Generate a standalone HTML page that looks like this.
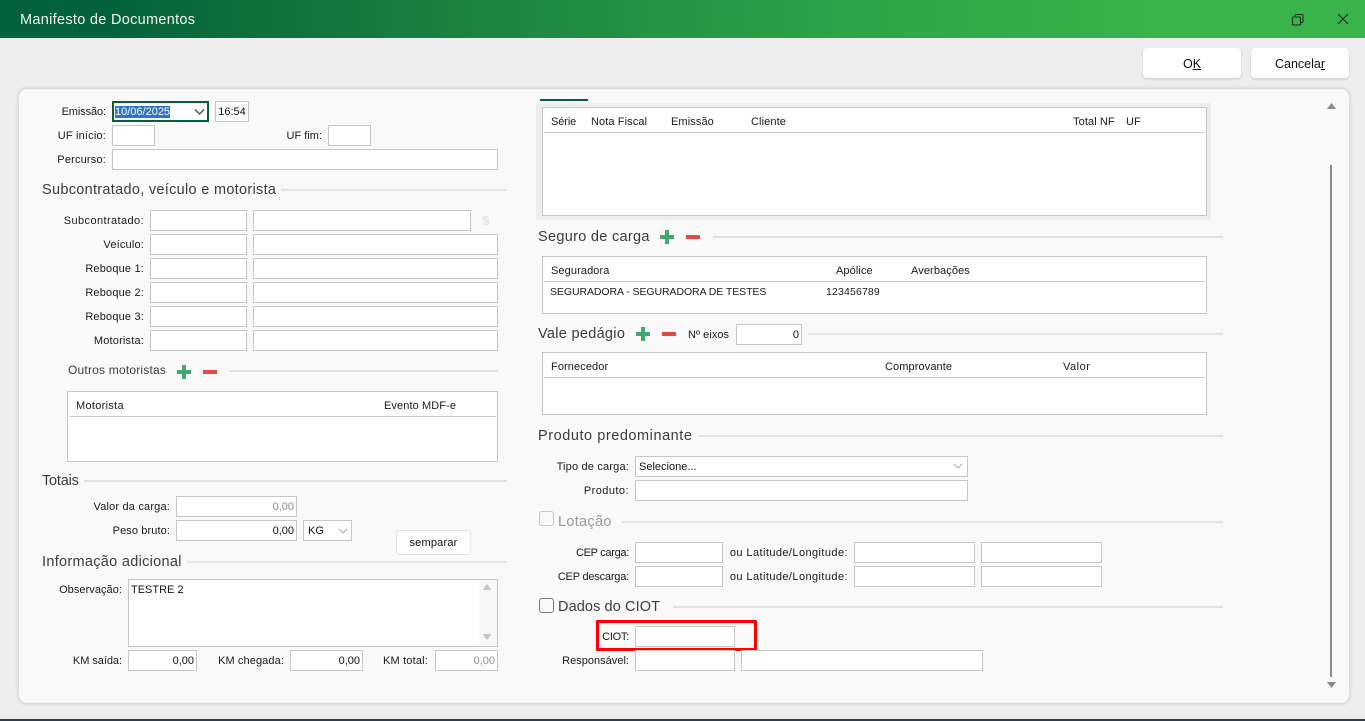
<!DOCTYPE html>
<html lang="pt-BR"><head><meta charset="utf-8"><title>Manifesto de Documentos</title>
<style>
*{box-sizing:border-box}
html,body{margin:0;padding:0;width:1365px;height:721px;overflow:hidden;background:#eee;font-family:"Liberation Sans",sans-serif;font-size:11px;color:#111}
.a{position:absolute}
#bar{left:0;top:0;width:1365px;height:38px;background:linear-gradient(90deg,#03623a 0%,#04623a 8%,#1a8040 32%,#2ba548 62%,#38b44a 85%,#38b44a 100%)}
#title{left:20px;top:12px;color:#f2f7f2;font-size:14.5px;line-height:17px;letter-spacing:.3px}
#foot{left:0;top:719px;width:1365px;height:2px;background:#2b3d4f}
.btn{background:#fff;border-radius:4px;box-shadow:0 1px 2px rgba(0,0,0,.18);text-align:center;font-size:12.5px;line-height:32px;height:30px;width:98px;top:48px}
#card{left:19px;top:89px;width:1330px;height:614px;background:#f9f9f9;border-radius:8px;box-shadow:0 0 5px rgba(0,0,0,.2)}
.f{position:absolute;background:#fff;border:1px solid #c6c6c6;height:21px;line-height:21px;text-align:right;padding:0 2px;font-size:11px;white-space:nowrap;overflow:hidden}
.l{position:absolute;text-align:right;line-height:21px;height:21px;white-space:nowrap;font-size:11px;letter-spacing:.18px;color:#1a1a1a;margin-top:1px}
.h{position:absolute;font-size:14.5px;line-height:20px;color:#3c3c3c;white-space:nowrap;letter-spacing:.3px;margin-top:1px}
.r{position:absolute;height:2px;background:#e2e2e2}
.t{position:absolute;background:#fff;border:1px solid #c6c6c6}
.t i{position:absolute;left:1px;right:1px;height:1px;background:#c9c9c9;display:block}
.c{position:absolute;line-height:14px;white-space:nowrap;font-size:11px;letter-spacing:.1px;color:#1a1a1a;margin-top:1px}
.g{color:#8d8d8d}
.p{position:absolute;width:14px;height:14px}
.p:before{content:"";position:absolute;left:5px;top:0;width:4px;height:14px;background:#3fa870}
.p:after{content:"";position:absolute;left:0;top:5px;width:14px;height:4px;background:#3fa870}
.m{position:absolute;width:14px;height:4px;background:#e8493f}
.cb{position:absolute;width:15px;height:15px;border:1px solid #777;border-radius:3px;background:#f9f9f9}
svg{display:block}
</style></head><body>
<div class="a" id="bar"></div>
<div class="a" id="title">Manifesto de Documentos</div>
<svg class="a" style="left:1291px;top:13px" width="14" height="14" viewBox="0 0 14 14" fill="none" stroke="#1f2a22" stroke-width="1.1"><rect x="1.5" y="4" width="8" height="8" rx="1"/><path d="M4 4V2.5q0-1 1-1h6q1 0 1 1v6q0 1-1 1H9.500"/></svg>
<svg class="a" style="left:1336px;top:12px" width="14" height="14" viewBox="0 0 14 14" fill="none" stroke="#1f2a22" stroke-width="1.1"><path d="M2 2l10 10M12 2L2 12"/></svg>

<div class="a btn" style="left:1143px">O<u>K</u></div>
<div class="a btn" style="left:1251px">Cancela<u>r</u></div>
<div class="a" id="card"></div>

<!-- left column -->
<div class="l" style="right:1259px;top:101px;letter-spacing:-.1px">Emissão:</div>
<div class="f" style="left:112px;top:101px;width:97px;border:2px solid #0b5c3c;text-align:left;line-height:18px;padding:0 1px"><span style="background:#2f74c8;color:#fff;font-size:11px">10/06/2025</span></div>
<svg class="a" style="left:194px;top:108px" width="11" height="8" viewBox="0 0 11 8" fill="none" stroke="#555" stroke-width="1.5"><path d="M1 1.500l4.500 4.500L10 1.500"/></svg>
<div class="f" style="left:215px;top:101px;width:34px;text-align:center;padding:0">16:54</div>
<div class="l" style="right:1259px;top:125px">UF início:</div>
<div class="f" style="left:112px;top:125px;width:43px"></div>
<div class="l" style="right:1043px;top:125px;letter-spacing:0">UF fim:</div>
<div class="f" style="left:328px;top:125px;width:43px"></div>
<div class="l" style="right:1259px;top:149px">Percurso:</div>
<div class="f" style="left:112px;top:149px;width:386px"></div>

<div class="h" style="left:42px;top:179px">Subcontratado, veículo e motorista</div><div class="r" style="left:281px;top:189px;width:226px"></div>

<div class="l" style="right:1221px;top:210px;letter-spacing:.4px">Subcontratado:</div>
<div class="f" style="left:150px;top:210px;width:97px"></div><div class="f" style="left:253px;top:210px;width:218px"></div>
<div class="a" style="left:482px;top:213px;color:#e6e6e6;font-size:13px;font-weight:bold">$</div>
<div class="l" style="right:1221px;top:234px">Veículo:</div>
<div class="f" style="left:150px;top:234px;width:97px"></div><div class="f" style="left:253px;top:234px;width:245px"></div>
<div class="l" style="right:1221px;top:258px">Reboque 1:</div>
<div class="f" style="left:150px;top:258px;width:97px"></div><div class="f" style="left:253px;top:258px;width:245px"></div>
<div class="l" style="right:1221px;top:282px">Reboque 2:</div>
<div class="f" style="left:150px;top:282px;width:97px"></div><div class="f" style="left:253px;top:282px;width:245px"></div>
<div class="l" style="right:1221px;top:306px">Reboque 3:</div>
<div class="f" style="left:150px;top:306px;width:97px"></div><div class="f" style="left:253px;top:306px;width:245px"></div>
<div class="l" style="right:1221px;top:330px">Motorista:</div>
<div class="f" style="left:150px;top:330px;width:97px"></div><div class="f" style="left:253px;top:330px;width:245px"></div>

<div class="h" style="left:68px;top:360px;font-size:12px;line-height:18px;letter-spacing:.2px">Outros motoristas</div>
<div class="p" style="left:177px;top:365px"></div><div class="m" style="left:203px;top:370px"></div>
<div class="r" style="left:229px;top:370px;width:269px"></div>
<div class="t" style="left:67px;top:391px;width:431px;height:71px"><i style="top:24px"></i></div>
<div class="c" style="left:76px;top:398px;letter-spacing:.3px">Motorista</div><div class="c" style="left:384px;top:398px">Evento MDF-e</div>

<div class="h" style="left:42px;top:470px;letter-spacing:-.2px">Totais</div><div class="r" style="left:84px;top:480px;width:423px"></div>
<div class="l" style="right:1195px;top:496px">Valor da carga:</div>
<div class="f g" style="left:176px;top:496px;width:121px">0,00</div>
<div class="l" style="right:1195px;top:520px;letter-spacing:.1px">Peso bruto:</div>
<div class="f" style="left:176px;top:520px;width:121px">0,00</div>
<div class="f" style="left:303px;top:520px;width:49px;text-align:left;padding-left:4px;line-height:21px">KG</div>
<svg class="a" style="left:338px;top:528px" width="10" height="6" viewBox="0 0 10 6" fill="none" stroke="#aaa"><path d="M1 1l4 4 4-4"/></svg>
<div class="a" style="left:396px;top:530px;width:75px;height:25px;background:#fff;border:1px solid #e3e3e3;border-radius:3px;text-align:center;line-height:25px;letter-spacing:.2px">semparar</div>
<div class="h" style="left:42px;top:551px">Informação adicional</div><div class="r" style="left:187px;top:561px;width:320px"></div>
<div class="l" style="right:1243px;top:579px;letter-spacing:.05px">Observação:</div>
<div class="f" style="left:128px;top:579px;width:370px;height:68px;text-align:left;line-height:20px;padding-left:2px">TESTRE 2</div>
<div class="a" style="left:479px;top:580px;width:18px;height:66px;background:#f8f8f8"></div>
<svg class="a" style="left:482px;top:584px" width="10" height="62" viewBox="0 0 10 62" fill="#c4c4c4"><path d="M5 0l4.500 6H.500zM.500 50h9L5 56z"/></svg>
<div class="l" style="right:1243px;top:650px;letter-spacing:-.05px">KM saída:</div>
<div class="f" style="left:128px;top:650px;width:69px">0,00</div>
<div class="l" style="right:1081px;top:650px;letter-spacing:.1px">KM chegada:</div>
<div class="f" style="left:290px;top:650px;width:73px">0,00</div>
<div class="l" style="right:937px;top:650px">KM total:</div>
<div class="f g" style="left:435px;top:650px;width:63px">0,00</div>

<!-- right column -->
<div class="a" style="left:540px;top:99px;width:48px;height:2px;background:#0b5c3c"></div>
<div class="a" style="left:536px;top:103px;width:675px;height:117px;background:#eee"></div>
<div class="t" style="left:542px;top:107px;width:665px;height:109px"><i style="top:24px"></i></div>
<div class="c" style="left:551px;top:114px;letter-spacing:-.1px">Série</div><div class="c" style="left:591px;top:114px">Nota Fiscal</div><div class="c" style="left:671px;top:114px">Emissão</div><div class="c" style="left:751px;top:114px">Cliente</div><div class="c" style="left:1073px;top:114px">Total NF</div><div class="c" style="left:1126px;top:114px">UF</div>

<div class="h" style="left:538px;top:226px">Seguro de carga</div>
<div class="p" style="left:660px;top:230px"></div><div class="m" style="left:686px;top:235px"></div>
<div class="r" style="left:713px;top:236px;width:510px"></div>
<div class="t" style="left:542px;top:256px;width:665px;height:58px"><i style="top:24px"></i></div>
<div class="c" style="left:551px;top:263px">Seguradora</div><div class="c" style="left:836px;top:263px">Apólice</div><div class="c" style="left:911px;top:263px">Averbações</div>
<div class="c" style="left:550px;top:284px;font-size:10.5px;letter-spacing:-.07px">SEGURADORA - SEGURADORA DE TESTES</div><div class="c" style="left:826px;top:284px;font-size:10.500px;letter-spacing:.15px">123456789</div>

<div class="h" style="left:538px;top:323px">Vale pedágio</div>
<div class="p" style="left:636px;top:327px"></div><div class="m" style="left:662px;top:332px"></div>
<div class="l" style="left:688px;top:324px;letter-spacing:.05px">Nº eixos</div>
<div class="f" style="left:736px;top:324px;width:66px">0</div>
<div class="r" style="left:808px;top:333px;width:415px"></div>
<div class="t" style="left:542px;top:352px;width:665px;height:63px"><i style="top:24px"></i></div>
<div class="c" style="left:551px;top:359px">Fornecedor</div><div class="c" style="left:885px;top:359px">Comprovante</div><div class="c" style="left:1063px;top:359px;letter-spacing:.5px">Valor</div>

<div class="h" style="left:538px;top:425px;letter-spacing:.55px">Produto predominante</div><div class="r" style="left:698px;top:435px;width:525px"></div>
<div class="l" style="right:736px;top:456px">Tipo de carga:</div>
<div class="f" style="left:635px;top:456px;width:333px;text-align:left;line-height:21px;padding-left:3px">Selecione...</div>
<svg class="a" style="left:953px;top:463px" width="10" height="6" viewBox="0 0 10 6" fill="none" stroke="#aaa"><path d="M1 1l4 4 4-4"/></svg>
<div class="l" style="right:736px;top:480px;letter-spacing:.45px">Produto:</div>
<div class="f" style="left:635px;top:480px;width:333px"></div>

<div class="cb" style="left:539px;top:511px;border-color:#c8c8c8"></div>
<div class="h" style="left:558px;top:511px;color:#9a9a9a">Lotação</div><div class="r" style="left:622px;top:521px;width:601px"></div>
<div class="l" style="right:736px;top:542px;letter-spacing:-.3px">CEP carga:</div>
<div class="f" style="left:635px;top:542px;width:88px"></div>
<div class="l" style="right:517px;top:542px;letter-spacing:.42px">ou Latitude/Longitude:</div>
<div class="f" style="left:854px;top:542px;width:121px"></div><div class="f" style="left:981px;top:542px;width:121px"></div>
<div class="l" style="right:736px;top:566px;letter-spacing:-.2px">CEP descarga:</div>
<div class="f" style="left:635px;top:566px;width:88px"></div>
<div class="l" style="right:517px;top:566px;letter-spacing:.42px">ou Latitude/Longitude:</div>
<div class="f" style="left:854px;top:566px;width:121px"></div><div class="f" style="left:981px;top:566px;width:121px"></div>

<div class="cb" style="left:539px;top:598px"></div>
<div class="h" style="left:558px;top:596px;letter-spacing:.1px">Dados do CIOT</div><div class="r" style="left:673px;top:606px;width:550px"></div>
<div class="l" style="right:736px;top:626px;letter-spacing:-.25px">CIOT:</div>
<div class="f" style="left:635px;top:626px;width:100px"></div>
<div class="a" style="left:596px;top:620px;width:161px;height:31px;border:3px solid #f00;border-radius:1px"></div>
<div class="l" style="right:736px;top:650px;letter-spacing:.02px">Responsável:</div>
<div class="f" style="left:635px;top:650px;width:100px"></div><div class="f" style="left:741px;top:650px;width:242px"></div>

<!-- scrollbar -->
<svg class="a" style="left:1326px;top:102px" width="11" height="8" viewBox="0 0 11 8" fill="#8a8a8a"><path d="M5.500 1l4.500 6H1z"/></svg>
<div class="a" style="left:1330px;top:165px;width:2px;height:512px;background:#8c8c8c"></div>
<svg class="a" style="left:1326px;top:681px" width="11" height="8" viewBox="0 0 11 8" fill="#8a8a8a"><path d="M1 1h9L5.500 7z"/></svg>
<div class="a" id="foot"></div>
</body></html>
